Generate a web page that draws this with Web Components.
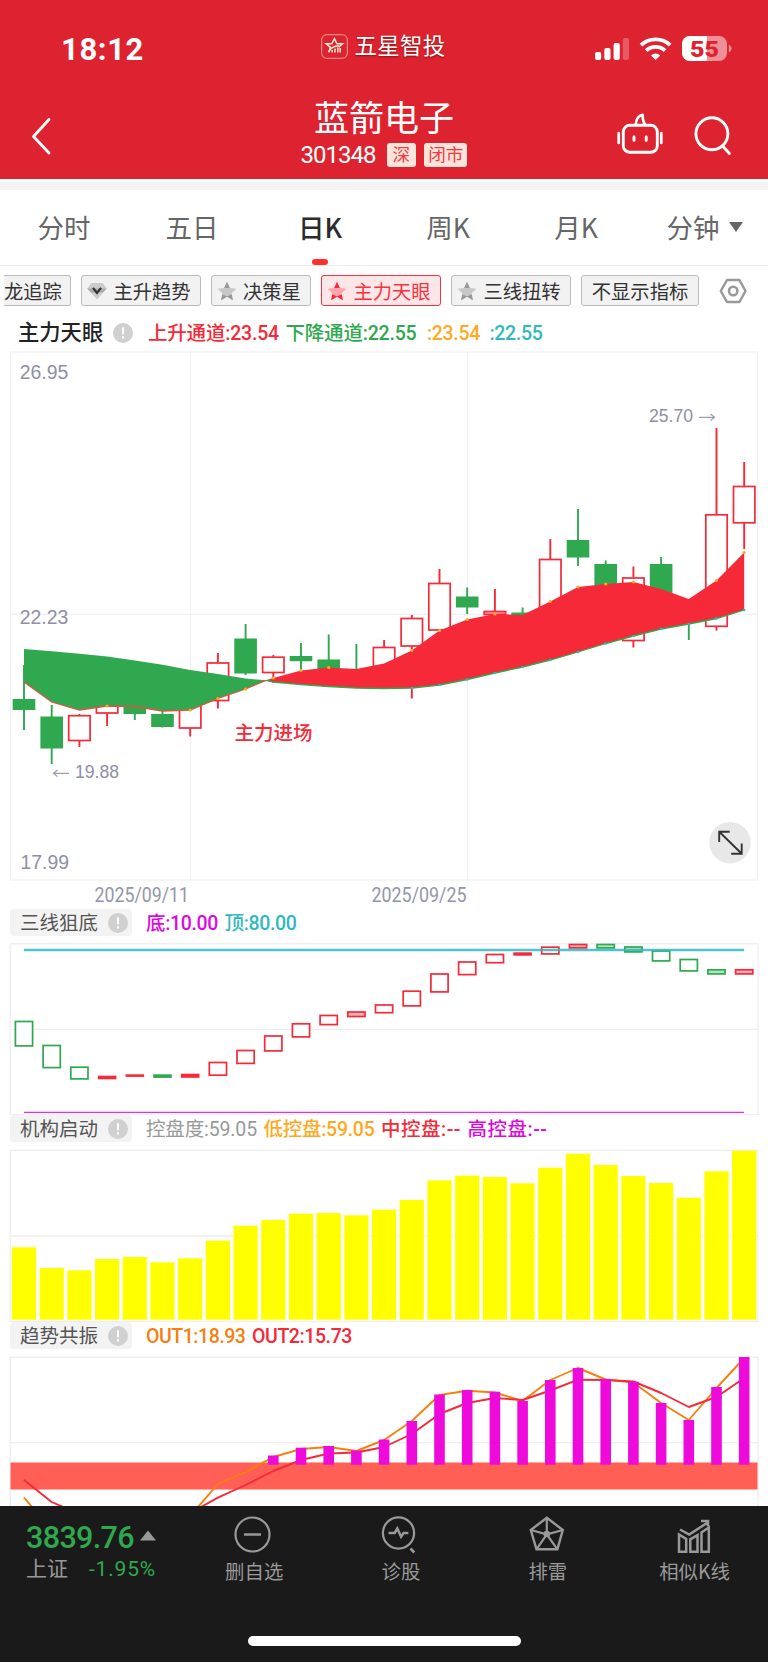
<!DOCTYPE html>
<html lang="zh-CN">
<head>
<meta charset="utf-8">
<title>蓝箭电子 301348</title>
<style>
  html, body {
    margin: 0;
    background: #fff;
  }
  body {
    width: 768px;
    height: 1663px;
    overflow: hidden;
    font-family: Roboto, "Noto Sans CJK SC", sans-serif;
  }
</style>
</head>
<body>
<stock-app></stock-app>

<script>
const RED = '#f52937'
const GREEN = '#2fa84f'
const STEP = 27.7
const cx = i => 24 + STEP * i

const define = (name, html, extra = {}) => {
  const tpl = document.createElement('template')
  tpl.innerHTML = html
  customElements.define(name, class extends HTMLElement {
    constructor(){
      super()
      this.attachShadow({ mode: 'open' })
      this.shadowRoot.appendChild(tpl.content.cloneNode(true))
    }
    connectedCallback(){
      if (extra.render) extra.render(this, this.shadowRoot)
    }
  })
}

// text tracked out (or in) to a given width
define('fit-text', `
<style>
  :host { display: inline-block; flex: none; white-space: nowrap; }
  span { display: inline-block; white-space: pre; }
</style>
<span></span>`, {
  render(host, root){
    const span = root.querySelector('span')
    span.textContent = host.getAttribute('text')
    const w = Number(host.getAttribute('w'))
    const natural = span.getBoundingClientRect().width
    span.style.letterSpacing = (w - natural) / span.textContent.length + 'px'
    host.style.width = w + 'px'
  }
})

define('status-bar', `
<style>
  :host {
    display: grid;
    grid-template-columns: 300px 1fr 300px;
    align-items: center;
    height: 94px;
    color: #fff;
    background: #dd232f;
  }
  .time { padding-left: 61px; font-size: 31px; font-weight: 700; line-height: 36px; padding-top: 5px; }
  .brand { display: flex; align-items: center; justify-content: center; gap: 7px; font-size: 22.5px; line-height: 28px; padding: 0 2px 2px 0; }
  .brand fit-text { text-shadow: 0 1px 2px rgba(80,0,0,.6); }
  .icons { display: flex; align-items: center; justify-content: flex-end; padding-right: 36px; padding-top: 4px; }
  svg { display: block; }
</style>
<div class="time"><fit-text text="18:12" w="83"></fit-text></div>
<div class="brand">
  <svg width="27" height="25" viewBox="0 0 27 25" fill="none" stroke="#ffe9d2">
    <rect x=".7" y=".7" width="25.6" height="23.6" rx="5" stroke="#f2a09d" stroke-width="1"/>
    <path d="M8 18.2 9.4 13.3 5.2 9.8h5.6L13.4 4.6l2.6 5.2h5.6l-4 3.4" stroke-width="1.5"/>
    <path d="M7.4 18c2-3.800 6-6 10.700-6.200M11.200 18.500v-2.400M14 18.500v-4M16.800 18.500v-5M19.200 18.500v-4.500" stroke-width="1.5"/>
  </svg>
  <fit-text text="五星智投" w="91"></fit-text>
</div>
<div class="icons">
  <svg width="138" height="28" viewBox="594 35 138 28">
    <g fill="#fff">
      <rect x="595" y="52" width="6.2" height="8" rx="2"/>
      <rect x="604.3" y="48" width="6.2" height="12" rx="2"/>
      <rect x="613.6" y="43" width="6.2" height="17" rx="2"/>
      <rect x="622.8" y="38" width="6.2" height="22" rx="2" opacity=".25"/>
      <path d="M655.6 60 651 55.4a6.6 6.6 0 0 1 9.2 0z"/>
    </g>
    <g fill="none" stroke="#fff" stroke-width="3.8">
      <path d="M641 45.2a21.2 21.2 0 0 1 29.2 0"/>
      <path d="M646.2 50.6a13.8 13.8 0 0 1 18.8 0"/>
    </g>
    <rect x="682" y="36" width="45" height="25" rx="8" fill="#ef8f97"/>
    <path d="M707 36h-17a8 8 0 0 0-8 8v9a8 8 0 0 0 8 8h17z" fill="#fff"/>
    <path d="M728.800 44.500q5.600 4 0 8z" fill="#ef8f97"/>
    <text x="690" y="56.500" font-family="Roboto, sans-serif" font-weight="900" font-size="22" textLength="29" lengthAdjust="spacingAndGlyphs" fill="#dd232f">55</text>
  </svg>
</div>`)

define('title-bar', `
<style>
  :host {
    display: grid;
    grid-template-columns: 200px 1fr 200px;
    height: 85px;
    color: #fff;
    background: #dd232f;
    border-bottom: 3px solid #fff;
  }
  .back { padding: 23px 0 0 30px; }
  .mid { display: flex; flex-direction: column; align-items: center; }
  .name { font-size: 35px; line-height: 40px; margin-top: 6px; }
  .code { display: flex; align-items: center; gap: 8px; font-size: 24px; line-height: 24px; margin-top: 2px; }
  .code fit-text { margin: 1px 3px 0 0; }
  b { font-weight: 400; font-size: 17.6px; line-height: 24px; height: 24px; padding: 0 4px; border-radius: 3px; color: #f33b3f; background: #ffe4dc; }
  b:first-of-type { padding: 0 6px; }
  .acts { display: flex; justify-content: flex-end; padding: 18px 36.5px 0 0; }
  svg { display: block; }
</style>
<div class="back">
  <svg width="22" height="40" viewBox="0 0 22 40" fill="none" stroke="#fff" stroke-width="2.8" stroke-linecap="round" stroke-linejoin="round"><path d="M19 2.5 3.5 19.5 19 36"/></svg>
</div>
<div class="mid">
  <div class="name">蓝箭电子</div>
  <div class="code"><fit-text text="301348" w="75"></fit-text><b>深</b><b>闭市</b></div>
</div>
<div class="acts">
  <svg width="116" height="46" viewBox="616 112 116 46" fill="none" stroke="#fff" stroke-width="2.9" stroke-linecap="round">
    <rect x="623.3" y="125.3" width="34" height="27" rx="6.5"/>
    <path d="M618.7 133.2v9.8M661.3 133.2v9.8" stroke-width="2.7"/>
    <path d="M634 137v3.4M646.2 137v3.4"/>
    <path d="M635.7 124.5c.4-5.5 2.4-8.8 7-9.8-.4 3.9.3 6.7 2.2 9.8" stroke-width="2.6" stroke-linejoin="round"/>
    <circle cx="711.9" cy="133.8" r="16"/>
    <path d="M722.6 146l6.8 7.5"/>
  </svg>
</div>`)

define('period-tabs', `
<style>
  :host {
    display: grid;
    grid-template-columns: repeat(6, 1fr);
    height: 75px;
    border-top: 8px solid #f3f3f3;
    border-bottom: 1px solid #eee;
    color: #666;
    font-family: "Noto Sans CJK SC", sans-serif;
    font-size: 26.5px;
  }
  div { display: flex; align-items: center; justify-content: center; height: 73px; padding-bottom: 2px; }
  .on { position: relative; color: #2b2b2b; font-weight: 500; }
  .on::after { content: ""; position: absolute; left: 56px; bottom: 0; width: 16px; height: 6px; border-radius: 3px; background: #ff3030; }
  svg { margin: 0 -2px 0 8px; }
</style>
<div>分时</div><div>五日</div><div class="on">日K</div><div>周K</div><div>月K</div>
<div>分钟<svg width="16" height="12"><path d="M1 1h14L8 11z" fill="#666"/></svg></div>`)

define('indicator-chip', `
<style>
  :host {
    display: flex;
    align-items: center;
    justify-content: center;
    box-sizing: border-box;
    flex: none;
    height: 31px;
    gap: 7px;
    font-size: 19.3px;
    color: #333;
    background: #f2f2f2;
    border: 1.5px solid #bbb;
    border-radius: 3px;
    white-space: nowrap;
  }
  :host([icon]) { padding-right: 4px; gap: 6px; }
  :host([active]) { color: #f5333f; background: #fde6e8; border-color: #f5333f; }
  :host([cut]) { justify-content: flex-start; border-left: none; border-radius: 0 3px 3px 0; }
  svg { display: block; }
  svg:empty { display: none; }
</style>
<svg width="20" height="20" viewBox="0 0 20 20"></svg><slot></slot>`, {
  render(host, root){
    const on = host.hasAttribute('active')
    const dark = on ? RED : '#999'
    const pale = on ? '#ffa3ad' : '#c8c8c8'
    const star = `<path d="M10 .8l2.8 6.3 6.6.7-5 4.6 1.5 6.8-5.900-3.500-5.900 3.500 1.500-6.800-5-4.600 6.600-.7z" fill="${pale}"/>
      <path d="M10 .8l2.8 6.3H7.2z" fill="${dark}"/>
      <path d="M5.2 13.2l5 2.4-6.1 3.6zM14.8 13.2l-5 2.4 6.1 3.6z" fill="${dark}"/>`
    const gem = `<path d="M4.2 2h11.6L19.7 7.5 10 18.5.3 7.5z" fill="#ccc"/>
      <path d="M.3 7.5h19.4L16 11.6H4z" fill="#aaa"/>
      <path d="M6 6.8l4 5.2 4-5.2" fill="none" stroke="#333" stroke-width="2.2"/>`
    root.querySelector('svg').innerHTML = { star, gem }[host.getAttribute('icon')] || ''
    host.style.width = host.getAttribute('w') + 'px'
  }
})

define('chip-row', `
<style>
  :host { display: flex; align-items: center; height: 49px; padding-left: 4px; }
  .strip { display: flex; gap: 10px; width: 695px; }
  svg { margin-left: 20px; }
</style>
<div class="strip">
  <indicator-chip w="67" cut>龙追踪</indicator-chip>
  <indicator-chip w="120" icon="gem">主升趋势</indicator-chip>
  <indicator-chip w="100" icon="star">决策星</indicator-chip>
  <indicator-chip w="120" icon="star" active>主力天眼</indicator-chip>
  <indicator-chip w="120" icon="star">三线扭转</indicator-chip>
  <indicator-chip w="118">不显示指标</indicator-chip>
</div>
<svg width="28" height="26" viewBox="0 0 28 26" fill="none" stroke="#999">
  <path d="M8 2h12.400L26.500 13 20.400 24H8L1.800 13z" stroke-width="2.500" stroke-linejoin="round"/>
  <circle cx="14.200" cy="13" r="4.200" stroke-width="2.600"/>
</svg>`)

define('legend-row', `
<style>
  :host { display: flex; align-items: flex-start; height: var(--h, 34px); padding-left: 10px; font-size: 19.5px; line-height: 27px; }
  .tag { display: flex; align-items: center; box-sizing: border-box; width: 122px; height: 27px; padding-left: 10px; gap: 9.500px; border-radius: 4px; background: #f3f3f3; color: #555; }
  .tag span { padding-top: 1px; }
  .values { display: flex; gap: 6.500px; padding-left: 14px; padding-top: 1px; }
  :host([plain]) { padding-top: 4px; }
  :host([plain]) .tag { width: 124px; padding-left: 8px; background: none; color: #222; font-size: 21.300px; font-weight: 500; }
  :host([plain]) .tag span { padding: 0; }
  :host([plain]) .values { padding-left: 14px; padding-top: 1px; }
</style>
<div class="tag"><span></span>
  <svg width="20" height="20" viewBox="0 0 20 20"><circle cx="10" cy="10" r="10" fill="#d0d0d0"/><path d="M10 4.200v7M10 13.200v2.300" stroke="#fff" stroke-width="2"/></svg>
</div>
<div class="values"><slot></slot></div>`, {
  render(host, root){
    root.querySelector('span').textContent = host.getAttribute('label')
  }
})

const svgHost = (h, body) => `
<style>
  :host { display: block; height: ${h}px; }
  svg { display: block; }
</style>${body}`

// [up?, high, body top, body bottom, low]
const candles = [
  [0,665,699.5,709.5,730],[0,705,717,748,764],[1,714,715.2,740.5,747],[1,700,700,713,726],[0,705,705,713.5,720],
  [0,710,714.5,726.5,727.5],[1,700,705,728,736.5],[1,653,662.5,700.5,708.5],[0,624,639,673,675],[1,655,656.7,672.5,683],
  [0,643,656.5,660.7,670],[0,634.5,660,670,675],[0,644,675,680,680],[1,640,647,668,668],[1,615,618,646,698.5],
  [1,569,583,630,632],[0,587.5,597,607,614],[1,589,611,614.5,618],[0,607.5,613,618,620],[1,539,559,630,630],
  [0,509,540.5,557,566],[0,560.5,564.5,590,590],[1,566.5,577.5,640.5,647.5],[0,557,564.5,600,600],[0,605,605,615,640],
  [1,428,514.3,626.3,630.5],[1,462,486,522.8,549]
]
const fast = [682,702,710,706,706.5,711,710,698.5,689,678,670.5,667.5,669,663.5,650.5,630.5,619.5,614,615,601.5,587,584,582,589,599,580.5,552.5]
const slow = [649,651.3,653.8,656.5,660.5,664.7,670,674,678.5,682,684.5,686.5,688,688.5,688,685,679.5,673,667,660,652,643.5,636,629,624,618.5,610]
const pts = (ys, from = 0) => ys.map((y, i) => `${cx(i + from).toFixed(1)},${y}`).join(' ')

const band = (from, to, color) => {
  const cross = '266,680.3'
  const top = pts(fast.slice(from, to), from)
  const bottom = pts(slow.slice(from, to), from).split(' ').reverse().join(' ')
  return from === 0
    ? `<polygon points="${top} ${cross} ${bottom}" fill="${color}"/>`
    : `<polygon points="${cross} ${top} ${bottom}" fill="${color}"/>`
}

define('main-chart', svgHost(557, ''), {
  render(host, root){
    const sticks = candles.map(([up, hi, t, b, lo], i) => {
      const x = cx(i)
      const c = up ? RED : GREEN
      const wick = `M${x} ${hi}V${t}M${x} ${b}V${lo}`
      return `<path d="${wick}" stroke="${c}" stroke-width="1.900"/>` + (up
        ? `<rect x="${x - 10.7}" y="${t + .5}" width="21.400" height="${Math.max(b - t - .5, 1)}" fill="${b - t < 5 ? '#ffa3ad' : '#fff'}" stroke="${c}" stroke-width="1.700"/>`
        : `<rect x="${x - 11.3}" y="${t - .5}" width="22.600" height="${b - t + 1}" fill="${c}"/>`)
    }).join('')
    const dots = [3,6,7,8,9,10,11,14,15,16,17,19,20,21,22,25,26].map(i => `<circle cx="${cx(i)}" cy="${fast[i]}" r="1.600" fill="#ffa922"/>`).join('')
      + slow.slice(14).map((y, i) => `<circle cx="${cx(i + 14)}" cy="${y}" r="1.300" fill="#2bbac0"/>`).join('')
    root.innerHTML += `
<svg width="768" height="557" viewBox="0 351 768 557">
  <g fill="none" stroke="#f0f0f6" stroke-width="1.200">
    <rect x="10.500" y="352" width="747" height="528"/>
    <path d="M10 614.400H758M190.500 352V880M467.400 352V880"/>
  </g>
  ${sticks}
  ${band(0, 9, GREEN)}${band(9, 27, RED)}
  <polyline points="${pts(fast.slice(0, 9))} 266,680.300" fill="none" stroke="#d9553f" stroke-width="1.300"/>
  <polyline points="266,680.300 ${pts(slow.slice(9), 9)}" fill="none" stroke="${GREEN}" stroke-width="1.300"/>
  ${dots}
  <g fill="#8e90a6" font-family="Liberation Sans, Arial, sans-serif">
    <g font-size="19.400"><text x="19.800" y="378.700">26.95</text><text x="19.800" y="624">22.23</text><text x="20.500" y="869">17.99</text></g>
    <g font-size="17.600"><text x="75" y="777.700">19.88</text><text x="649" y="422">25.70</text></g>
  </g>
  <path d="M69 773.300H53.500M57.500 770l-4 3.300 4 3.300M699 417.300h15.500M710.500 414l4 3.300-4 3.300" fill="none" stroke="#9a9cb0" stroke-width="1.200"/>
  <text x="234.500" y="740" font-size="19.500" font-weight="500" fill="${RED}">主力进场</text>
  <g font-size="20" fill="#9496aa">
    <text x="94.500" y="902" textLength="94.500" lengthAdjust="spacingAndGlyphs">2025/09/11</text>
    <text x="371.500" y="902" textLength="95" lengthAdjust="spacingAndGlyphs">2025/09/25</text>
  </g>
  <circle cx="730" cy="842.700" r="20.700" fill="#e8e8e8"/>
  <path d="M719.500 832l22 21.500M719.200 842v-10.300h10.500M741.700 843.500v10.200h-10.500" fill="none" stroke="#333" stroke-width="1.900"/>
</svg>`
  }
})

// [up?, top, bottom]
const boxes = [
  [0,1021,1046],[0,1045,1067.7],[0,1066.7,1079],[1,1076,1079],[1,1074.6,1076.6],[0,1074.6,1077.6],[1,1074,1077.5],[1,1062,1075.3],
  [1,1050,1063.5],[1,1035.5,1051],[1,1023.3,1037],[1,1015,1024.7],[1,1011.5,1016.6],[1,1004.5,1012.8],[1,990.7,1006],[1,973.5,992],
  [1,961.5,974.7],[1,954,962.8],[1,952.6,955.4],[1,946.7,954],[1,944,948],[0,944,948],[0,946.5,952],[0,950.5,961],[0,959,971],[0,969.3,974],[1,969.3,974]
]

define('bottom-chart', svgHost(172, ''), {
  render(host, root){
    const marks = boxes.map(([up, t, b], i) => {
      const c = up ? RED : GREEN
      return b - t < 4
        ? `<rect x="${cx(i) - 9.3}" y="${t - .3}" width="18.600" height="${b - t + .6}" fill="${c}"/>`
        : `<rect x="${cx(i) - 8.6}" y="${t + .5}" width="17.200" height="${b - t - .6}" fill="${b - t < 6 ? (up ? '#ffb3b8' : '#b5e5bf') : '#fff'}" stroke="${c}" stroke-width="1.700"/>`
    }).join('')
    root.innerHTML += `
<svg width="768" height="172" viewBox="0 943 768 172">
  <g fill="none" stroke="#eee" stroke-width="1.300"><rect x="10.200" y="943.800" width="747.800" height="170.800"/><path d="M10 1029.300H758"/></g>
  ${marks}
  <path d="M24 950H744" stroke="#2fb9be" stroke-opacity=".85" stroke-width="2.300"/>
  <path d="M24 1112.300H744" stroke="#e82be8" stroke-width="1.200"/>
</svg>`
  }
})

const control = [382,444,451,417,411,427,415,362,317,300,281,279,286,269,240,181,167,171,190,143,101,135,168,189,233,154,92].map(v => 1120 + v / 3)

define('control-chart', svgHost(173, ''), {
  render(host, root){
    const bars = control.map((y, i) => `<rect x="${(cx(i) - 12.1).toFixed(1)}" y="${y.toFixed(1)}" width="24.200" height="${(1319.7 - y).toFixed(1)}"/>`).join('')
    root.innerHTML += `
<svg width="768" height="173" viewBox="0 1149 768 173">
  <g fill="none" stroke="#eee" stroke-width="1.300"><rect x="10.200" y="1150.300" width="747.800" height="171"/><path d="M10 1236H758"/></g>
  <g fill="#ff0">${bars}</g>
</svg>`
  }
})

const out1 = [1497.5,1530,1550,1555,1550,1535,1516,1484,1472,1457,1449,1447,1451,1440,1421,1395,1390.7,1392.5,1401,1380,1368,1379.5,1382.5,1403,1420,1388,1358]
const out2 = [1480,1502,1514,1530,1535,1528,1513,1497.7,1485,1471,1460,1453.5,1452.5,1447,1434,1414,1403,1398,1400,1390.5,1379.7,1380,1381.5,1393,1407,1397,1378]
const pillars = [1455.5,1447.7,1446,1450.5,1439.5,1421,1394.5,1390,1391.7,1401,1380,1368,1379,1381.7,1403,1420,1387,1357]

define('trend-chart', svgHost(150, ''), {
  render(host, root){
    const bars = pillars.map((y, i) => `<rect x="${(cx(i + 9) - 5.3).toFixed(1)}" y="${y}" width="10.600" height="${1464.7 - y}"/>`).join('')
    root.innerHTML += `
<svg width="768" height="150" viewBox="0 1356 768 150">
  <g fill="none" stroke="#eee" stroke-width="1.300"><rect x="10.200" y="1357.200" width="747.800" height="170"/><path d="M10 1442.700H758"/></g>
  <rect x="10.500" y="1462.500" width="747" height="27" fill="#ff5f55"/>
  <g fill="none" stroke-width="1.900" stroke-linejoin="round"><polyline points="${pts(out1)}" stroke="#f5800f"/><polyline points="${pts(out2)}" stroke="${RED}"/></g>
  <g fill="#ee0adb">${bars}</g>
</svg>`
  }
})

define('bar-action', `
<style>
  :host { display: flex; flex-direction: column; align-items: center; width: 147px; color: #999; font: 19.400px/28px "Noto Sans CJK SC", sans-serif; }
  svg { display: block; width: 42px; height: 42px; margin: 8px 3px 1px 0; fill: none; stroke: #999; stroke-width: 2.200; }
</style>
<svg viewBox="0 0 42 42"></svg><slot></slot>`, {
  render(host, root){
    root.querySelector('svg').innerHTML = {
      minus: '<circle cx="20.500" cy="20.500" r="17"/><path d="M12 20.500h17" stroke-width="2.500"/>',
      pulse: '<circle cx="20.500" cy="19" r="15.600" stroke-width="2.300"/><path d="M10.500 19h6.200l2.600-4.500 3.800 8.200 2.500-3.700h4.800M32.500 34.500l3.800 4" stroke-width="2.600"/>',
      penta: '<g transform="translate(.8 0)"><path d="M21 3.800 37 16 31.600 35.300H10.700L5 16z" stroke-width="2.400"/><path d="M21 3.800v16M37 16l-16 4.500 10.600 14.800M5 16l16 4.500-10.300 14.800" stroke-width="2.200"/><circle cx="21" cy="20" r="3.300" fill="#999" stroke="none"/></g>',
      bars: '<path d="M7 20.500v17.300h7.200V25zM18.300 25.300v12.500h7.200V21.200zM29.500 18.500v19.300h7.300V13.500z" stroke-width="2.500"/><path d="M8 15.500l9.200 5L35 9M29 7h7v5.500" stroke-width="2.500"/>'
    }[host.getAttribute('icon')]
  }
})

define('bottom-bar', `
<style>
  :host { display: flex; flex-direction: column; justify-content: space-between; align-items: center; box-sizing: border-box; height: 156px; padding-bottom: 16px; background: #1a1a1a; }
  .row { display: flex; width: 768px; }
  .index { box-sizing: border-box; width: 181px; padding: 15px 0 0 26px; color: ${GREEN}; }
  .value { display: flex; align-items: center; font-size: 30.500px; line-height: 34px; font-weight: 500; }
  .value svg { margin-left: 6px; position: relative; top: -3px; }
  .sub { display: flex; gap: 21px; font-size: 21px; line-height: 29px; }
  .sub span { color: #999; }
  .home { width: 273px; height: 10px; border-radius: 5px; background: #fff; }
</style>
<div class="row">
  <div class="index">
    <div class="value"><fit-text text="3839.76" w="108"></fit-text><svg width="16" height="11"><path d="M0 10.500 8 .500l8 10z" fill="#999"/></svg></div>
    <div class="sub"><span>上证</span><fit-text text="-1.95%" w="67"></fit-text></div>
  </div>
  <bar-action icon="minus">删自选</bar-action>
  <bar-action icon="pulse">诊股</bar-action>
  <bar-action icon="penta">排雷</bar-action>
  <bar-action icon="bars">相似K线</bar-action>
</div>
<div class="home"></div>`)

define('stock-app', `
<style>
  :host { display: block; width: 768px; }
  fit-text { font-weight: 500; }
</style>
<status-bar></status-bar>
<title-bar></title-bar>
<period-tabs></period-tabs>
<chip-row></chip-row>
<legend-row plain label="主力天眼" style="--h: 32px">
  <fit-text style="color: #f52937" text="上升通道:23.54" w="131"></fit-text>
  <fit-text style="color: #2fa84f" text="下降通道:22.55" w="131"></fit-text>
  <fit-text style="color: #ffa922; margin-left: 4px" text=":23.54" w="53"></fit-text>
  <fit-text style="color: #2fb9be; margin-left: 3px" text=":22.55" w="53"></fit-text>
</legend-row>
<main-chart></main-chart>
<legend-row label="三线狙底" style="--h: 34px; padding-top: 1px">
  <fit-text style="color: #dd0ae0" text="底:10.00" w="72"></fit-text>
  <fit-text style="color: #2fb9be" text="顶:80.00" w="72"></fit-text>
</legend-row>
<bottom-chart></bottom-chart>
<legend-row label="机构启动">
  <fit-text style="color: #999; font-weight: 400" text="控盘度:59.05" w="111"></fit-text>
  <fit-text style="color: #ffa922" text="低控盘:59.05" w="111"></fit-text>
  <fit-text style="color: #f52937" text="中控盘:--" w="80"></fit-text>
  <fit-text style="color: #dd0ae0" text="高控盘:--" w="80"></fit-text>
</legend-row>
<control-chart></control-chart>
<legend-row label="趋势共振">
  <fit-text style="color: #f5800f" text="OUT1:18.93" w="99.5"></fit-text>
  <fit-text style="color: #f52937" text="OUT2:15.73" w="100"></fit-text>
</legend-row>
<trend-chart></trend-chart>
<bottom-bar></bottom-bar>`)
</script>
</body>
</html>
